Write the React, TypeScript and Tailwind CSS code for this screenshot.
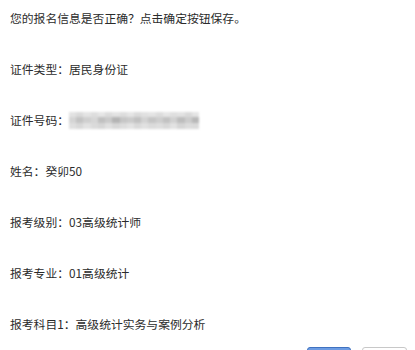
const blurRows = [
  ["#e2e2e2", "#dadada", "#e4e4e4", "#dedede", "#e6e6e6", "#dcdcdc", "#e3e3e3", "#dddddd", "#e5e5e5", "#dbdbdb", "#e1e1e1", "#e4e4e4", "#dcdcdc", "#e6e6e6", "#dfdfdf", "#e2e2e2", "#d9d9d9", "#e4e4e4"],
  ["#d4d4d4", "#c3c3c3", "#cfcfcf", "#d6d6d6", "#c0c0c0", "#cacaca", "#b4b4b4", "#c6c6c6", "#cbcbcb", "#c1c1c1", "#d3d3d3", "#c5c5c5", "#cecece", "#c2c2c2", "#d1d1d1", "#bdbdbd", "#cccccc", "#b8b8b8"],
  ["#dfdfdf", "#d8d8d8", "#e2e2e2", "#dadada", "#d6d6d6", "#e0e0e0", "#d7d7d7", "#dddddd", "#e3e3e3", "#d9d9d9", "#e1e1e1", "#dbdbdb", "#dedede", "#d8d8d8", "#e2e2e2", "#d5d5d5", "#dcdcdc", "#dadada"],
];

const rows = [
  { label: "证件类型：", value: "居民身份证" },
  { label: "证件号码：", value: null },
  { label: "姓名：", value: "癸卯50" },
  { label: "报考级别：", value: "03高级统计师" },
  { label: "报考专业：", value: "01高级统计" },
  { label: "报考科目1：", value: "高级统计实务与案例分析" },
];

export default function App() {
  return (
    <div
      className="w-[415px] h-[350px] overflow-hidden bg-white text-[#2b2b2b] text-[11.8px] leading-[18px]"
      style={{ fontFamily: '"Noto Sans CJK SC", "Noto Sans", sans-serif' }}
    >
      <div className="flex flex-col gap-[33px] pl-[10px] pt-[9px]">
        <div>您的报名信息是否正确？点击确定按钮保存。</div>
        {rows.map((row) => (
          <div key={row.label} className="flex items-center">
            <span>{row.label}</span>
            {row.value ? (
              <span>{row.value}</span>
            ) : (
              <div className="flex flex-col h-[17px] w-[130px] blur-[1px]">
                {blurRows.map((r, ri) => (
                  <div key={ri} className="flex flex-1">
                    {r.map((c, i) => (
                      <div key={i} className="flex-1" style={{ backgroundColor: c }} />
                    ))}
                  </div>
                ))}
              </div>
            )}
          </div>
        ))}
      </div>
      <div className="flex justify-end gap-[11px] pr-[8px] mt-[14px]">
        <button className="w-[44px] h-[24px] rounded-[3px] border border-[#3f72c0] bg-[#6d9ce3]" />
        <button className="w-[45px] h-[24px] rounded-[3px] border border-[#c8c8c8] bg-white" />
      </div>
    </div>
  );
}
